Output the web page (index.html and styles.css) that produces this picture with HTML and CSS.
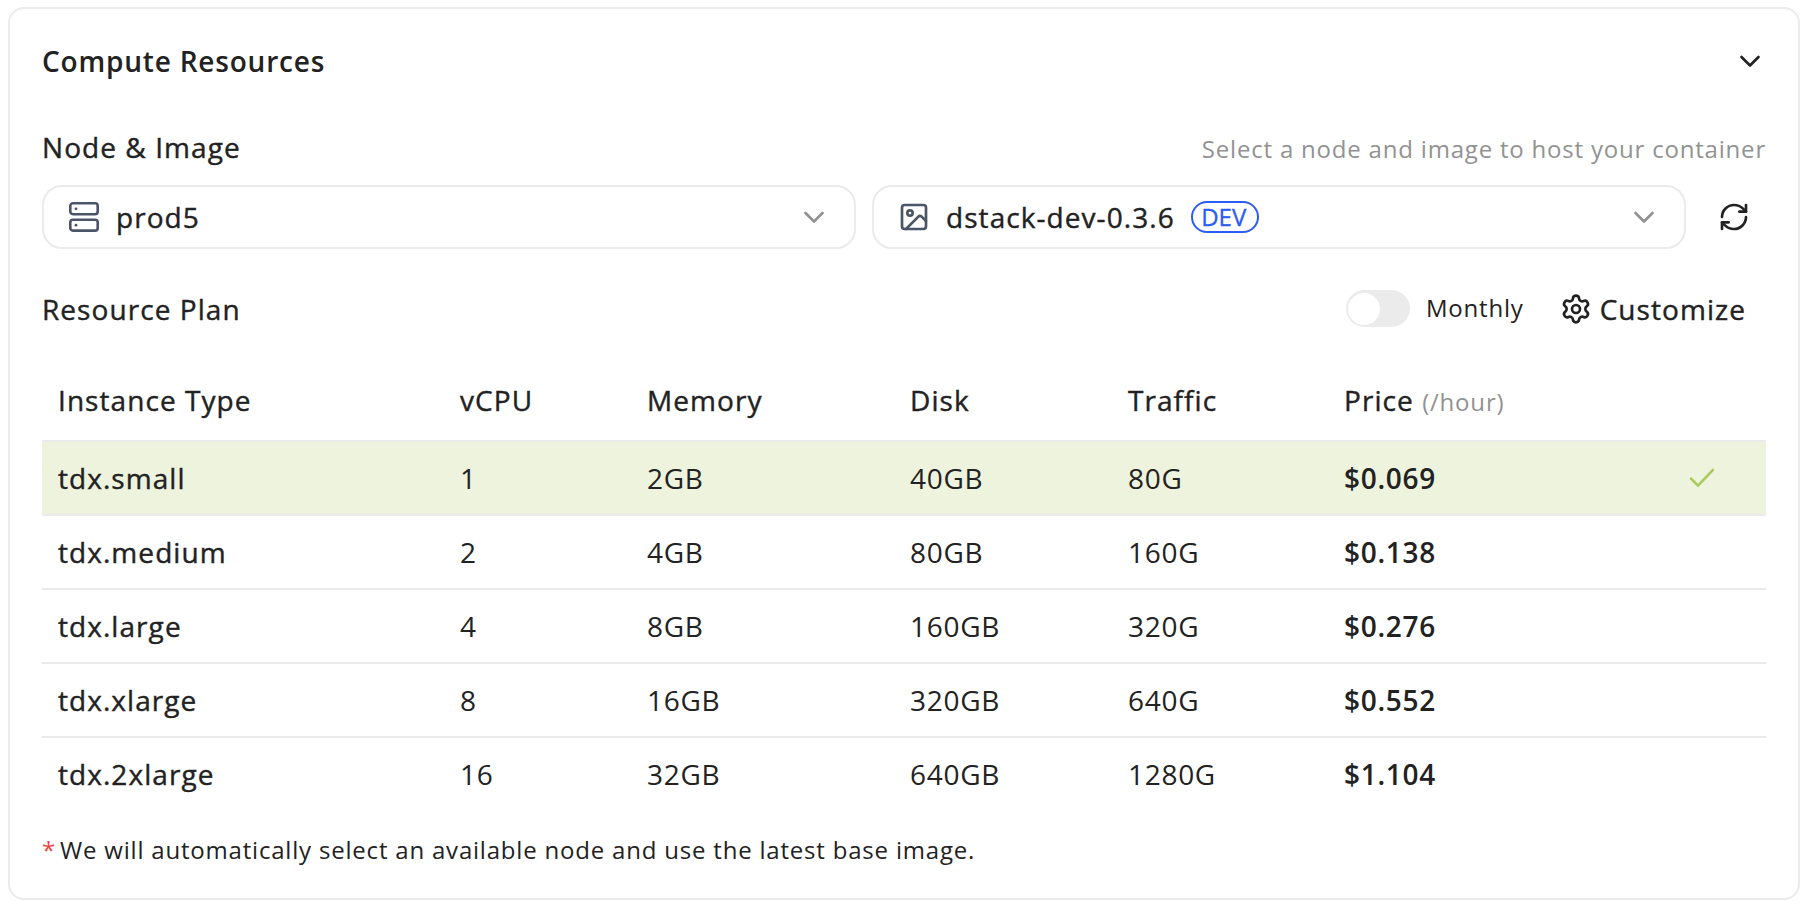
FILE: index.html
```html
<!DOCTYPE html>
<html lang="en">
<head>
<meta charset="utf-8">
<title>Compute Resources</title>
<link rel="stylesheet" href="styles.css">
</head>
<body>
<section class="card">
  <header class="card-header">
    <h2 class="card-title">Compute Resources</h2>
    <svg class="chevron chevron-dark" viewBox="0 0 28 28"><path d="M5.5 10l8.5 8.5 8.5-8.5"/></svg>
  </header>

  <div class="field-head">
    <span class="label">Node &amp; Image</span>
    <span class="hint">Select a node and image to host your container</span>
  </div>
  <div class="selects">
    <div class="select">
      <svg class="select-icon server" viewBox="0 0 32 32"><rect x="2.3" y="2.3" width="27.4" height="10.9" rx="2.6"/><rect x="2.3" y="18.7" width="27.4" height="10.9" rx="2.6"/><circle class="dot" cx="8" cy="7.8" r="1.4"/><circle class="dot" cx="8" cy="24.2" r="1.4"/></svg>
      <span class="select-value">prod5</span>
      <svg class="chevron" viewBox="0 0 28 28"><path d="M5.5 10l8.5 8.5 8.5-8.5"/></svg>
    </div>
    <div class="select">
      <svg class="select-icon" viewBox="0 0 24 24"><rect width="18" height="18" x="3" y="3" rx="2"/><circle cx="9" cy="9" r="2"/><path d="m21 15-3.086-3.086a2 2 0 0 0-2.828 0L6 21"/></svg>
      <span class="select-value">dstack-dev-0.3.6</span>
      <span class="badge">DEV</span>
      <svg class="chevron" viewBox="0 0 28 28"><path d="M5.5 10l8.5 8.5 8.5-8.5"/></svg>
    </div>
    <button class="refresh" aria-label="Refresh"><svg class="refresh-icon" viewBox="0 0 24 24"><path d="M3 12a9 9 0 0 1 9-9 9.75 9.75 0 0 1 6.74 2.74L21 8"/><path d="M21 3v5h-5"/><path d="M21 12a9 9 0 0 1-9 9 9.75 9.75 0 0 1-6.74-2.74L3 16"/><path d="M8 16H3v5"/></svg></button>
  </div>

  <div class="plan-head">
    <span class="label">Resource Plan</span>
    <div class="plan-actions">
      <span class="switch"><span class="knob"></span></span>
      <span class="switch-label">Monthly</span>
      <button class="customize">
        <svg class="gear" viewBox="0 0 24 24"><path d="M9.671 4.136a2.34 2.34 0 0 1 4.659 0 2.34 2.34 0 0 0 3.319 1.915 2.34 2.34 0 0 1 2.33 4.033 2.34 2.34 0 0 0 0 3.831 2.34 2.34 0 0 1-2.33 4.033 2.34 2.34 0 0 0-3.319 1.915 2.34 2.34 0 0 1-4.659 0 2.34 2.34 0 0 0-3.32-1.915 2.34 2.34 0 0 1-2.33-4.033 2.34 2.34 0 0 0 0-3.831A2.34 2.34 0 0 1 6.35 6.051a2.34 2.34 0 0 0 3.319-1.915"/><circle cx="12" cy="12" r="3"/></svg>
        <span>Customize</span>
      </button>
    </div>
  </div>

  <table class="plans">
    <colgroup><col class="c-type"><col class="c-cpu"><col class="c-mem"><col class="c-disk"><col class="c-traffic"><col class="c-price"><col class="c-check"></colgroup>
    <thead><tr><th>Instance Type</th><th>vCPU</th><th>Memory</th><th>Disk</th><th>Traffic</th><th class="price-head">Price <span class="unit">(/hour)</span></th><th></th></tr></thead>
    <tbody>
      <tr class="selected"><td class="type">tdx.small</td><td>1</td><td>2GB</td><td>40GB</td><td>80G</td><td class="price">$0.069</td><td class="check-cell"><svg class="check" viewBox="0 0 28 28"><path d="M3 14.6l7 7L25 5.9"/></svg></td></tr>
      <tr><td class="type">tdx.medium</td><td>2</td><td>4GB</td><td>80GB</td><td>160G</td><td class="price">$0.138</td><td></td></tr>
      <tr><td class="type">tdx.large</td><td>4</td><td>8GB</td><td>160GB</td><td>320G</td><td class="price">$0.276</td><td></td></tr>
      <tr><td class="type">tdx.xlarge</td><td>8</td><td>16GB</td><td>320GB</td><td>640G</td><td class="price">$0.552</td><td></td></tr>
      <tr><td class="type">tdx.2xlarge</td><td>16</td><td>32GB</td><td>640GB</td><td>1280G</td><td class="price">$1.104</td><td></td></tr>
    </tbody>
  </table>

  <p class="note"><span class="star">*</span>We will automatically select an available node and use the latest base image.</p>
</section>
</body>
</html>
```
FILE: styles.css
```css
* { box-sizing: border-box; }
body {
  margin: 0;
  padding: 7px 12px 5px 8px;
  background: #fff;
  color: #222;
  font-family: "Open Sans", sans-serif;
  font-size: 28px;
  line-height: 40px;
  letter-spacing: 0.7px;
}
button { margin: 0; padding: 0; border: 0; background: none; color: inherit; font: inherit; letter-spacing: inherit; }
svg { display: block; flex: none; fill: none; stroke: currentColor; stroke-linecap: round; stroke-linejoin: round; }

.card { height: 893px; border: 2px solid #ebebeb; border-radius: 16px; padding: 32px; }
.card-header { display: flex; align-items: center; justify-content: space-between; height: 40px; padding-right: 2px; }
.card-title { margin: 0; font-size: 28px; font-weight: 600; letter-spacing: 0.8px; }
.chevron { width: 28px; height: 28px; color: #929292; stroke-width: 2.7; margin-left: auto; }
.chevron-dark { color: #222; }

/* medium weight: regular outlines, slightly thickened and spaced */
.label, .select-value, .customize, .plans th, .plans .type {
  font-weight: 500;
  letter-spacing: 1.06px;
  -webkit-text-stroke: 0.4px currentColor;
}

.field-head { display: flex; align-items: center; justify-content: space-between; height: 40px; margin: 46px 0 18px; }
.hint { padding-top: 4px; font-size: 24px; letter-spacing: 0.8px; color: #929292; }

.selects { display: grid; grid-template-columns: 1fr 1fr 64px; column-gap: 16px; }
.select { display: flex; align-items: center; height: 64px; padding: 0 26px 0 24px; border: 2px solid #ebebeb; border-radius: 20px; }
.select-icon { width: 32px; height: 32px; margin-right: 16px; color: #4b5568; stroke-width: 2; }
.server { stroke-width: 2.6; }
.dot { fill: currentColor; stroke: none; }
.badge { width: 68px; height: 32px; margin-left: 16px; padding-right: 2px; border: 2px solid #2b5cf5; border-radius: 16px; color: #2b5cf5; font-size: 24px; line-height: 28px; letter-spacing: 0; text-align: center; -webkit-text-stroke: 0.3px currentColor; }
.refresh { display: grid; place-items: center; }
.refresh-icon { width: 32px; height: 32px; stroke-width: 2; }

.plan-head { display: flex; align-items: center; justify-content: space-between; height: 40px; margin-top: 40px; }
.plan-actions { display: flex; align-items: center; padding-right: 20px; }
.switch { display: flex; align-items: center; width: 64px; height: 37px; margin-bottom: 1px; padding: 2px; border-radius: 19px; background: #ebebeb; }
.knob { width: 32px; height: 32px; border-radius: 50%; background: #fff; }
.switch-label { margin: 0 36px 2px 16px; font-size: 24px; letter-spacing: 0.8px; }
.customize { display: flex; align-items: center; }
.gear { width: 32px; height: 32px; margin-right: 8px; stroke-width: 2; }

.plans { width: 100%; margin-top: 31px; table-layout: fixed; border-collapse: separate; border-spacing: 0; }
.c-type { width: 402px; }
.c-cpu { width: 187px; }
.c-mem { width: 263px; }
.c-disk { width: 218px; }
.c-traffic { width: 216px; }
.c-price { width: 310px; }
.plans th, .plans td { height: 74px; padding: 0 16px; text-align: left; border-bottom: 2px solid #ebebeb; white-space: nowrap; vertical-align: middle; }
.plans th { height: 82px; }
.plans .price-head { padding-top: 2px; }
.plans tbody tr:last-child td { border-bottom-color: transparent; }
.plans .unit { font-size: 24px; font-weight: 400; letter-spacing: 0.8px; color: #929292; -webkit-text-stroke: 0; }
.price { font-weight: 600; }
.selected td { background: #eef3dd; background-clip: padding-box; }
.check { width: 28px; height: 28px; margin: 0 auto; color: #a9c95a; stroke-width: 2.6; }

.note { display: flex; margin: 18px 0 0; font-size: 24px; letter-spacing: 0.8px; }
.star { margin-right: 4px; color: #ef4444; }
```
